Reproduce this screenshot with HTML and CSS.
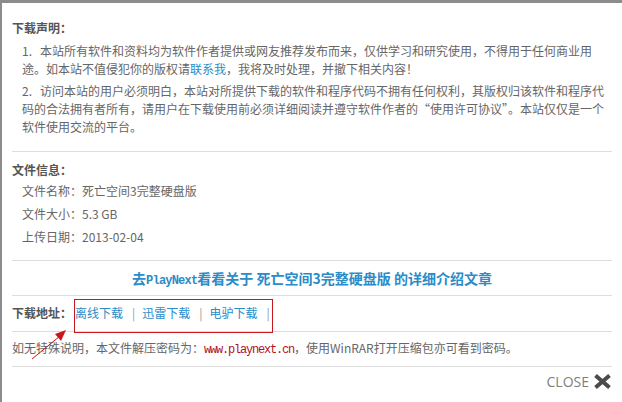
FILE: index.html
```html
<!DOCTYPE html>
<html lang="zh-CN">
<head>
	<meta charset="utf-8">
	<title>下载</title>
	<link rel="stylesheet" href="styles.css">
</head>
<body>
	<div class="dialog">
		<div class="sec notice">
			<h3>下载声明：</h3>
			<p class="item"><span class="no">1.</span>本站所有软件和资料均为软件作者提供或网友推荐发布而来，仅供学习和研究使用，不得用于任何商业用途。如本站不值侵犯你的版权请<a href="#">联系我</a>，我将及时处理，并撤下相关内容！</p>
			<p class="item"><span class="no">2.</span>访问本站的用户必须明白，本站对所提供下载的软件和程序代码不拥有任何权利，其版权归该软件和程序代码的合法拥有者所有，请用户在下载使用前必须详细阅读并遵守软件作者的“使用许可协议”。本站仅仅是一个软件使用交流的平台。</p>
		</div>
		<div class="sec info">
			<h3>文件信息：</h3>
			<ul>
				<li>文件名称：死亡空间3完整硬盘版</li>
				<li>文件大小：5.3 GB</li>
				<li>上传日期：2013-02-04</li>
			</ul>
		</div>
		<div class="sec more">
			<a href="#">去<span class="en">PlayNext</span>看看关于 死亡空间3完整硬盘版 的详细介绍文章</a>
		</div>
		<div class="sec down">
			<b>下载地址：</b><a href="#" class="first">离线下载</a><span class="sep">|</span><a href="#">迅雷下载</a><span class="sep">|</span><a href="#">电驴下载</a><span class="sep">|</span>
		</div>
		<div class="sec pwd">
			如无特殊说明，本文件解压密码为：<span class="pass">www.playnext.cn</span>，使用WinRAR打开压缩包亦可看到密码。
		</div>
		<div class="close">
			<span>CLOSE</span>
			<svg width="19" height="15" viewBox="0 0 19 15"><path d="M2.5 1.5 L16.5 13.5 M16.5 1.5 L2.5 13.5" stroke="#4b4b4b" stroke-width="4"/></svg>
		</div>

		<!-- 标注 -->
		<div class="mark-box"></div>
		<svg class="mark-arrow" width="50" height="40" viewBox="0 0 50 40">
			<line x1="2" y1="37" x2="30" y2="14" stroke="#c8161d" stroke-width="1"/>
			<polygon points="36,8 25,12 31,19" fill="#c8161d"/>
		</svg>
	</div>
</body>
</html>
```

FILE: styles.css
```css
html, body {
	margin:0;
	padding:0;
	background:#fff;
}
body {
	font-family:"Noto Sans CJK SC", sans-serif;
	font-size:12px;
	color:#666;
}
a {
	color:#2a8cc8;
	text-decoration:none;
}
.dialog {
	position:relative;
	height:402px;
	box-sizing:border-box;
	border-top:3px solid #8c8c8c;
	border-left:2px solid #8c8c8c;
	overflow:hidden;
}
.sec {
	margin:0 10px;
	border-bottom:1px solid #ddd;
	line-height:18px;
}
h3 {
	margin:0;
	font-size:12px;
	line-height:18px;
	color:#555;
}

/* 下载声明 */
.notice {
	padding:16px 0 15px;
}
.notice h3 {
	margin-bottom:5px;
}
.item {
	margin:0;
	padding-left:10px;
}
.item + .item {
	margin-top:4px;
}
.no {
	padding-right:8px;
}

/* 文件信息 */
.info {
	padding:9px 0 12px;
}
.info ul {
	margin:0;
	padding:0 0 0 10px;
	list-style:none;
}
.info li {
	line-height:23px;
}

/* 单行的几栏 */
.more, .down, .pwd {
	height:18px;
	overflow:hidden;
	white-space:nowrap;
}
.more {
	padding:8px 0;
	text-align:center;
	font-size:14px;
	font-weight:bold;
}
.more .en {
	font-family:"Liberation Mono", monospace;
	font-size:12px;
	line-height:1;
	letter-spacing:-0.8px;
}

.down {
	padding:8px 0 9px;
}
.down b {
	color:#555;
}
.down .first {
	margin-left:3px;
}
.sep {
	margin:0 7px 0 9px;
	color:#999;
}

.pwd {
	padding:7px 0 9px;
}
.pass {
	font-family:"Liberation Mono", monospace;
	line-height:1;
	color:#b3121a;
	letter-spacing:-1.2px;
}

.close {
	margin-top:5px;
	padding-right:10px;
	display:flex;
	justify-content:flex-end;
	align-items:center;
	gap:4px;
	height:18px;
	font-family:"Open Sans", sans-serif;
	font-size:14px;
	color:#808080;
}

.mark-box {
	position:absolute;
	left:72px;
	top:296px;
	width:199px;
	height:34px;
	box-sizing:border-box;
	border:1px solid #c8161d;
}
.mark-arrow {
	position:absolute;
	left:28px;
	top:319px;
}
```
